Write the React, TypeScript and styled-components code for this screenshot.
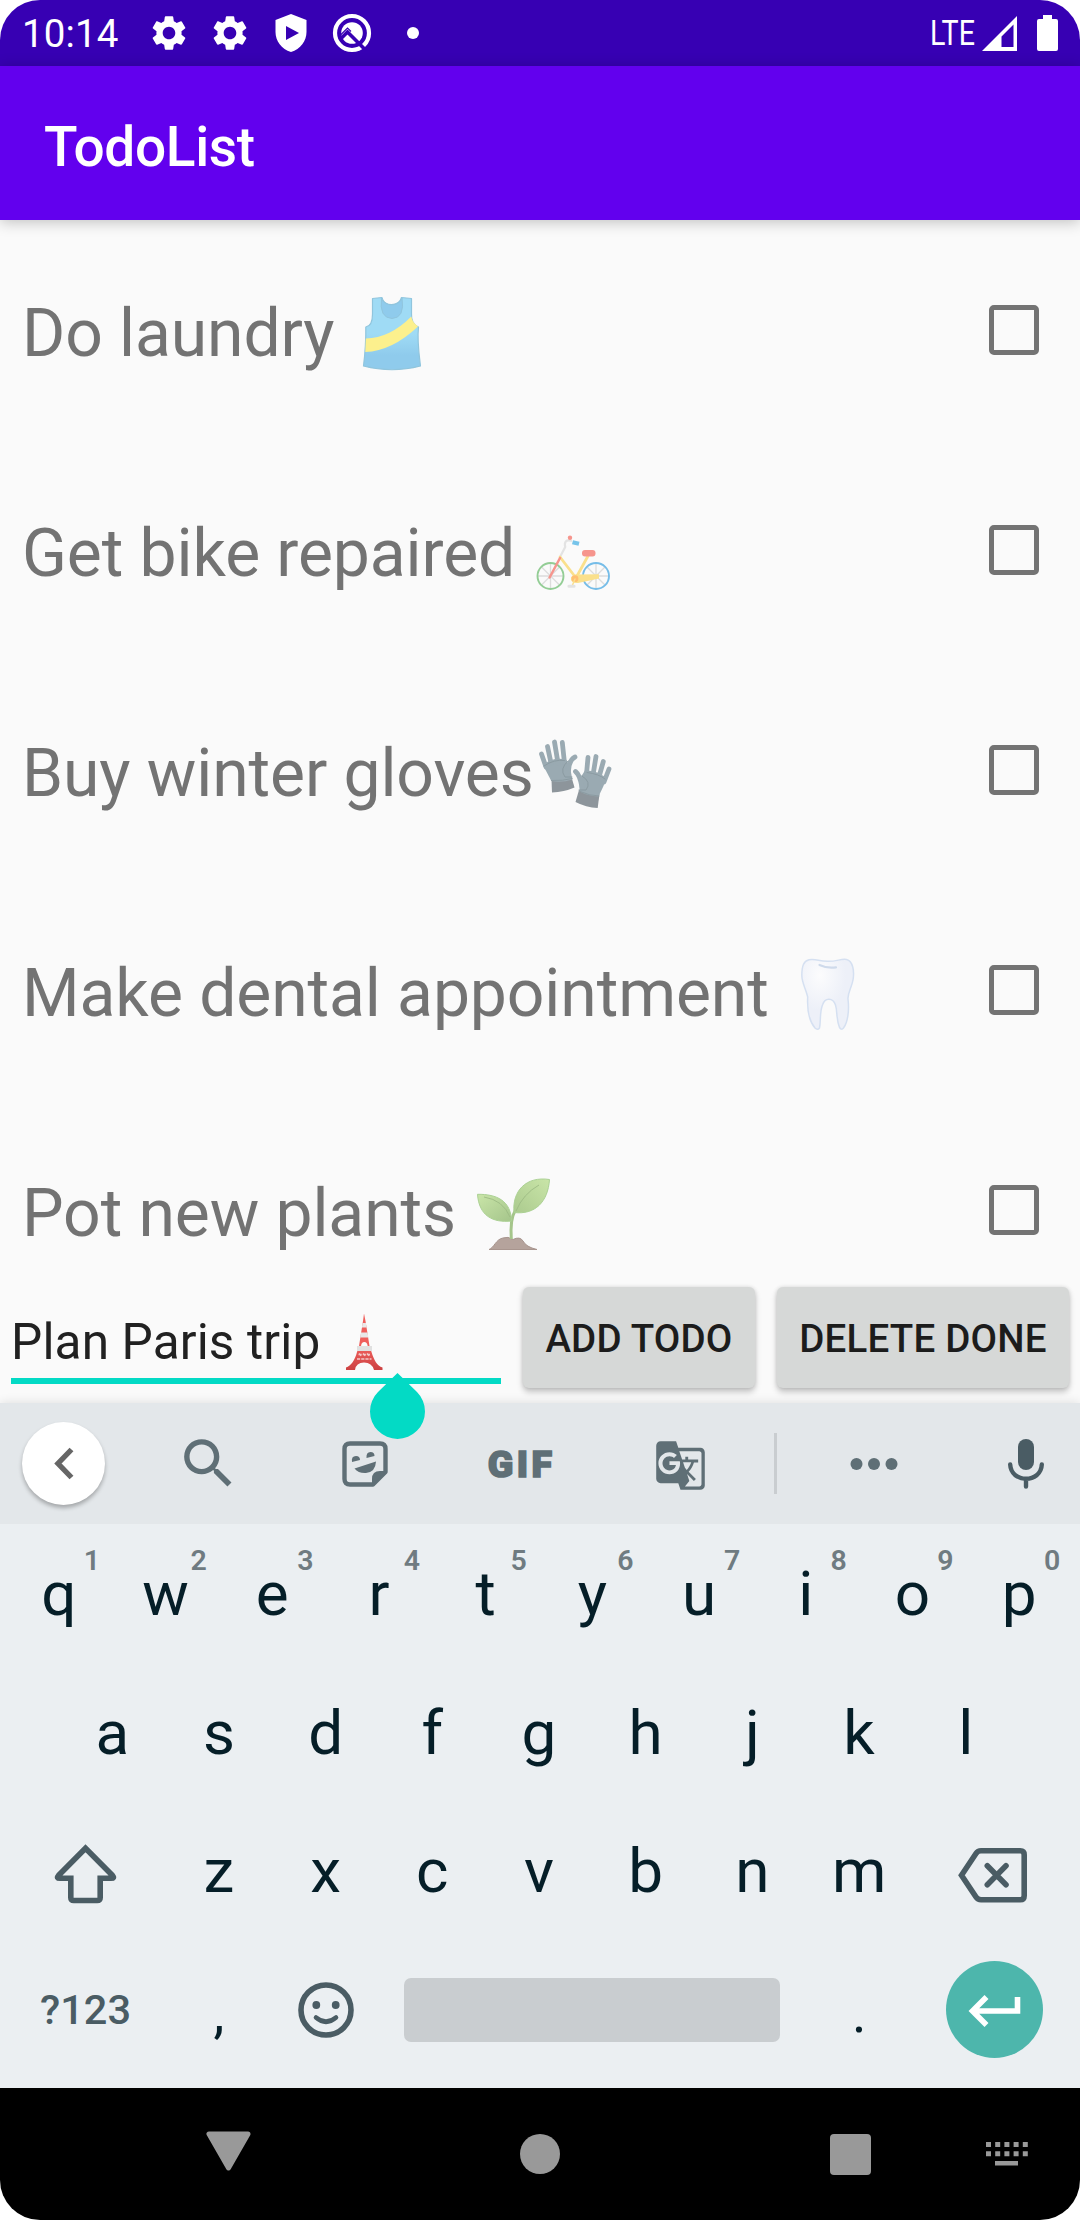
import React from "react";
import styled, { createGlobalStyle } from "styled-components";
import { MdGTranslate, MdSearch, MdSettings } from "react-icons/md";

const GlobalStyle = createGlobalStyle`
  body { margin: 0; background: #fff; }
  * { box-sizing: border-box; }
  svg { display: block; flex: none; overflow: visible; }
`;

const Screen = styled.div`
  width: 1080px;
  height: 2220px;
  display: flex;
  flex-direction: column;
  overflow: hidden;
  border-radius: 40px;
  background: #fafafa;
  font-family: Roboto, "Noto Sans", sans-serif;
`;

const StatusBar = styled.header`
  height: 66px;
  flex: none;
  display: flex;
  align-items: center;
  background: #3700b3;
  color: #fff;
`;

const Clock = styled.time`
  width: 138px;
  padding: 1px 0 0 22px;
  font-size: 38.5px;
  line-height: 46px;
  letter-spacing: 0.15px;
`;

const StatusSlot = styled.span`
  width: 61px;
  display: flex;
  justify-content: center;
`;

const NotificationDot = styled.i`
  width: 12px;
  height: 12px;
  border-radius: 50%;
  background: #fff;
`;

const SystemIcons = styled.div`
  margin-left: auto;
  padding-right: 22px;
  display: flex;
  align-items: center;
`;

const NetworkLabel = styled.span`
  width: 52px;
  font-size: 34.5px;
  line-height: 40px;
  transform: scaleX(0.83);
  transform-origin: left center;
  white-space: nowrap;
`;

const BatterySlot = styled.span`
  padding-left: 20px;
`;

const AppBar = styled.div`
  height: 154px;
  flex: none;
  display: flex;
  align-items: center;
  padding: 7px 44px 0;
  background: #6200ee;
  color: #fff;
  position: relative;
  box-shadow: 0 2px 14px rgba(0, 0, 0, 0.24);
`;

const Title = styled.h1`
  margin: 0;
  font-size: 55px;
  line-height: 64px;
  font-weight: 500;
  letter-spacing: -0.35px;
`;

const TodoList = styled.main`
  height: 1051px;
  flex: none;
  overflow: hidden;
`;

const TodoRow = styled.div`
  height: 220px;
  padding: 0 41px 0 22px;
  display: flex;
  align-items: center;
`;

const TodoText = styled.span`
  padding-top: 7px;
  font-size: 66px;
  line-height: 78px;
  letter-spacing: -0.1px;
  color: #737373;
  white-space: pre;
`;

const CheckBox = styled.span`
  width: 50px;
  height: 50px;
  margin-left: auto;
  border: 5.5px solid #737373;
  border-radius: 5px;
`;

const EntryBar = styled.div`
  height: 132px;
  flex: none;
  display: flex;
  align-items: flex-start;
  gap: 22px;
  padding: 16px 11px 0;
`;

const EntryField = styled.div`
  position: relative;
  width: 490px;
  flex: none;
  height: 97px;
  padding-top: 22px;
  display: flex;
  align-items: flex-start;
  border-bottom: 6px solid #03dac5;
`;

const EntryText = styled.span`
  padding-top: 4px;
  font-size: 49.5px;
  line-height: 58px;
  letter-spacing: 0.15px;
  color: #212121;
  white-space: pre;
`;

const CursorHandle = styled.span`
  position: absolute;
  left: 359px;
  top: 86px;
  z-index: 2;
`;

const ActionButton = styled.button<{ $width: number }>`
  width: ${(p) => p.$width}px;
  height: 101px;
  padding: 2px 0 0;
  flex: none;
  border: 0;
  border-radius: 6px;
  background: #d6d8d7;
  box-shadow: 0 4px 6px rgba(0, 0, 0, 0.22), 0 0 4px rgba(0, 0, 0, 0.12);
  color: #1c1c1c;
  font: 500 38.5px / 46px Roboto, "Noto Sans", sans-serif;
  letter-spacing: 0.2px;
  white-space: nowrap;
`;

const Keyboard = styled.section`
  height: 685px;
  flex: none;
  display: flex;
  flex-direction: column;
  background: #ebeff2;
  box-shadow: 0 0 10px rgba(0, 0, 0, 0.12);
`;

const Toolbar = styled.div`
  height: 121px;
  flex: none;
  display: grid;
  grid-template-columns: 127px 163px 149px 162px 173px 3px 193px 110px;
  align-items: center;
  justify-items: center;
  background: #e3e7ea;
  color: #5f6f76;
`;

const BackCircle = styled.span`
  width: 83px;
  height: 83px;
  display: flex;
  align-items: center;
  justify-content: center;
  border-radius: 50%;
  background: #fff;
  box-shadow: 0 3px 4px rgba(0, 0, 0, 0.28);
`;

const GifLabel = styled.span`
  font-size: 37.5px;
  line-height: 44px;
  font-weight: 900;
  letter-spacing: 3.4px;
  padding-left: 3px;
  -webkit-text-stroke: 1.6px #5f6f76;
`;

const TranslateSlot = styled.span`
  padding: 4px 14px 0 0;
`;

const Divider = styled.i`
  width: 3px;
  height: 61px;
  background: #c9cdd0;
`;

const MicSlot = styled.span`
  padding-left: 2px;
`;

const Keys = styled.div`
  flex: none;
  padding: 20px 7.5px 0 5.5px;
  display: flex;
  flex-direction: column;
`;

const KeyRow = styled.div<{ $packed?: boolean }>`
  height: ${(p) => (p.$packed ? 120 : 138.5)}px;
  display: flex;
  justify-content: ${(p) => (p.$packed ? "flex-start" : "center")};
`;

const Key = styled.span<{ $units?: number }>`
  position: relative;
  width: ${(p) => (p.$units ?? 1) * 106.7}px;
  height: 100px;
  flex: none;
  display: flex;
  align-items: center;
  justify-content: center;
  font-size: 62px;
  line-height: 72px;
  color: #051e28;
`;

const ModifierKey = styled(Key)`
  padding-top: 6px;
`;

const Hint = styled.sup`
  position: absolute;
  left: 50%;
  top: 0;
  width: 66px;
  text-align: center;
  font-size: 28.5px;
  line-height: 34px;
  font-weight: 600;
  color: #6f7b81;
`;

const ModeKey = styled(Key)`
  font-size: 41.5px;
  font-weight: 500;
  color: #4a5c64;
`;

const PunctuationKey = styled(Key)`
  padding-top: 6px;
  font-size: 55px;
`;

const SpaceBar = styled.span`
  width: 376px;
  height: 64px;
  flex: none;
  margin: 18px 26px 0 25px;
  border-radius: 7px;
  background: #c9cdd0;
`;

const EnterKey = styled.span`
  width: 97px;
  height: 97px;
  flex: none;
  margin: 1px 0 0 33px;
  display: flex;
  align-items: center;
  justify-content: center;
  border-radius: 50%;
  background: #4db6ac;
`;

const NavBar = styled.nav`
  height: 132px;
  flex: none;
  display: grid;
  grid-template-columns: 457px 166px 455px;
  justify-items: center;
  align-items: center;
  background: #000;
  position: relative;
`;

const BackSlot = styled.span`
  padding-bottom: 6px;
`;

const SwitcherSlot = styled.span`
  position: absolute;
  right: 52px;
  top: 54px;
`;

/* ---------- status icons ---------- */

const ShieldIcon = () => (
  <svg width="32" height="38" viewBox="0 0 32 38">
    <path fill="#fff" fillRule="evenodd" d="M16 0 31.5 6v12c0 9-6 17-15.500 20C6.500 35 .5 27 .5 18V6zM11 12v14l13-7z" />
  </svg>
);

const DebugIcon = () => (
  <svg width="38" height="38" viewBox="0 0 38 38" fill="none">
    <circle cx="19" cy="19" r="17" stroke="#fff" strokeWidth="4.200" />
    <circle cx="19" cy="19" r="10.800" fill="#fff" />
    <path d="M7 25.500 14.500 18 33 36.500" stroke="#3700b3" strokeWidth="3.600" />
    <path d="M7.500 21 14.500 14 18 17.500" stroke="#3700b3" strokeWidth="1.200" />
  </svg>
);

const SignalIcon = () => (
  <svg width="35" height="35" viewBox="0 0 35 35">
    <path fill="#fff" fillRule="evenodd" d="M0 35 35 0V35zM31.500 8.500 19.500 20.500V31H31.500z" />
  </svg>
);

const BatteryIcon = () => (
  <svg width="21" height="36" viewBox="0 0 21 36">
    <path fill="#fff" d="M6 0h9v4h4q2 0 2 2v28q0 2-2 2H2q-2 0-2-2V6q0-2 2-2h4z" />
  </svg>
);

/* ---------- emoji ---------- */

const TankTop = () => (
  <svg width="82" height="82" role="img" aria-label="running shirt">
    <defs>
      <linearGradient id="shirt" x1="0" y1="0" x2="0" y2="1">
        <stop offset="0.500" stopColor="#9fdbf5" />
        <stop offset="0.800" stopColor="#8fcbec" />
      </linearGradient>
    </defs>
    <path
      d="M21.500 9.500 31 8.500C33 18 48 18 50.500 8.500L60.500 9.500V25Q60 35 67.500 38C66 52 68 65 69.500 77Q41 84.500 12.500 77C14 65 15 50 14.800 38Q21.500 37 21.500 25z"
      fill="url(#shirt)"
      stroke="#90c5dd"
      strokeWidth="1.200"
      strokeLinejoin="round"
    />
    <path d="M30.500 9C33 18 48 18 51 9Q54 29 41 29.500Q28 29 30.500 9z" fill="#8fcbec" stroke="#90c5dd" strokeWidth="1" />
    <path d="M14.800 49.500Q39 49 60.300 27.500Q61 33 67 37.500Q41 62 14.300 63z" fill="#fcf08d" />
  </svg>
);

const spokes = [0, 45, 90, 135];

const Wheel = ({ x, color }: { x: number; color: string }) => (
  <g transform={`translate(${x} 67)`} fill="none">
    {spokes.map((a) => (
      <path key={a} d="M-12 0H12" stroke="#dcdcdc" strokeWidth="1.300" transform={`rotate(${a})`} />
    ))}
    <circle r="13" stroke={color} strokeWidth="1.900" />
  </g>
);

const Bicycle = () => (
  <svg width="82" height="82" role="img" aria-label="bicycle" fill="none" strokeLinecap="round">
    <Wheel x={18.5} color="#93cd95" />
    <Wheel x={64} color="#76bde8" />
    <path d="M28.500 47 33.200 38Q31.500 30 39 31.800" stroke="#e3e3e3" strokeWidth="2.200" />
    <circle cx="38" cy="28.700" r="2.200" fill="#f6958d" />
    <path d="M40.500 33.300 47 34.800" stroke="#76c4ea" strokeWidth="4.200" strokeLinecap="butt" />
    <path d="M56 47 45 67M28 48 43.300 68" stroke="#fae08c" strokeWidth="2.800" />
    <path d="M28 49 17.600 68.500" stroke="#f6958d" strokeWidth="2.500" />
    <path d="M43 65.500 67 65.200V69.500L46 74Q38 74.500 39 68z" fill="#fae08c" />
    <circle cx="43" cy="69.700" r="3.400" fill="#ffbf72" />
    <path d="M43 70 40.500 76" stroke="#fae08c" strokeWidth="1.500" />
    <rect x="35.500" y="75.700" width="8" height="3" rx="1.300" fill="#e3e3e3" />
    <rect x="50" y="41" width="13.500" height="6.500" rx="3" fill="#f6958d" />
  </svg>
);

const Gloves = () => (
  <svg width="82" height="82" role="img" aria-label="gloves" fill="none" strokeLinecap="round" strokeLinejoin="round">
    <path d="M17.500 51 18 63.500Q30 63 40.500 58.500L37.500 48z" fill="#8d959b" />
    <path d="M45 61 41.500 73Q52 78.500 63.700 79L65.500 65z" fill="#8d959b" />
    <g fill="#9aaab2">
      <path d="M9 36Q20 27 32.500 31L36 38 38.300 50.500Q28 54 17.300 52z" />
      <path d="M51 41.500Q62 41 72 48.500L69.500 57 64.500 67.500Q54 67 45.500 62.500V50z" />
    </g>
    <g stroke="#9aaab2" strokeWidth="4.800">
      <path d="M7.500 25 12 38M13.500 17.500 17 34M20.500 13 24 34M28.300 13.500 30.500 34" />
      <path d="M54 28.500 52.500 45M62 27.500 59 46M69.300 32.500 65 48M75 40 70 53" />
      <path d="M41 28Q35 31 34.500 42M41.500 42.500Q46 46 48 58" />
    </g>
    <g stroke="#89989f" strokeWidth="0.900">
      <path d="M10 37Q20 30 30.500 31.500M34 32Q25 40 31 48L38 48M17.500 51.500Q29 52 38.300 49.500" />
      <path d="M53 43.500Q65 45 71 50M48 47Q58 53 52 61L45 61M46 62.500Q56 67 65 67" />
    </g>
  </svg>
);

const Tooth = () => (
  <svg width="82" height="82" role="img" aria-label="tooth">
    <defs>
      <radialGradient id="enamel" cx="0.350" cy="0.230" r="0.500">
        <stop offset="0" stopColor="#fcfcfd" />
        <stop offset="1" stopColor="#edf0f8" />
      </radialGradient>
    </defs>
    <path
      d="M24 10.800C31 9.500 34 12.500 43 12.300C52 12.500 56 9.500 61.500 10.500C68 12 69.500 22 68 31C66.500 39 62.500 44 63 50C64.500 62 62.500 74 58.500 79Q56.500 81.500 54.500 78.500C51 70 52.500 62 50.500 56C48 48.500 40 48 37.500 56C34.500 63 36 72 34.500 79Q32.500 81.500 30 79C24 72 22 62 22.700 48C21 40 16.800 34 16.800 26C17 17 18.500 12 24 10.800z"
      fill="url(#enamel)"
      stroke="#d5e0f1"
      strokeWidth="1.500"
    />
    <path d="M34.500 16Q42 19.500 51 18.300" fill="none" stroke="#cfdaeb" strokeWidth="2.200" strokeLinecap="round" />
  </svg>
);

const Seedling = () => (
  <svg width="82" height="82" role="img" aria-label="seedling">
    <defs>
      <linearGradient id="leaf" x1="1" y1="0" x2="0" y2="1">
        <stop offset="0" stopColor="#c9e5a8" />
        <stop offset="1" stopColor="#abca8e" />
      </linearGradient>
      <linearGradient id="leafSmall" x1="0" y1="0" x2="1" y2="1">
        <stop offset="0" stopColor="#c9e5a8" />
        <stop offset="1" stopColor="#a5c58b" />
      </linearGradient>
    </defs>
    <path d="M17 80.500C22 79 24 70 31 69Q36 67 41 70.500Q48 67 51 72Q54 78 65 80.500z" fill="#b5a39c" stroke="#a8958e" strokeWidth="1" />
    <path d="M43 42Q38 50 39.300 70" fill="none" stroke="#a5c58b" strokeWidth="3" />
    <path d="M5.500 25.300C25 25 39 32 39.500 52C21 54 7 47 5.500 25.300z" fill="url(#leafSmall)" stroke="#abd193" strokeWidth="1" />
    <path d="M77.500 10.500C54 7 40 22 42 43.500C63 46 76 33 77.500 10.500z" fill="url(#leaf)" stroke="#abd193" strokeWidth="1" />
    <path d="M12 28Q31 31 38 48M44 42Q51 25 67 16" fill="none" stroke="#9dbb83" strokeWidth="0.900" />
  </svg>
);

const Tower = () => (
  <svg width="62" height="62" role="img" aria-label="tower">
    <defs>
      <linearGradient id="tower" x1="0" y1="0" x2="0" y2="1">
        <stop offset="0.600" stopColor="#ef5f5c" />
        <stop offset="1" stopColor="#cc4142" />
      </linearGradient>
    </defs>
    <path
      d="M31 4.500 32.500 12 36.500 37 38.500 43C41 51 44 57 49.500 58.500V61H41Q39 53.500 31 53.500T22 61H13V58.500C18 57 22 51 24 43L26 37 30 12z"
      fill="url(#tower)"
    />
    <path d="M29.600 14h3.300l.8 4.500h-4.800zM28 23.500h6.500l.9 5h-8.200z" fill="#e8e8e8" />
    <rect x="24" y="37" width="15" height="5" fill="#e0e0e0" />
    <path d="M28 37Q28.500 33 31.300 33T34.700 37z" fill="#fafafa" />
    <path d="M25.500 45.500h11.500M24 50h14.500M26 44.500l3 3M30 44.500l3 3M34 44.500l3 3" stroke="#f3c9c8" strokeWidth="1.600" strokeDasharray="3.200 1" />
  </svg>
);

/* ---------- keyboard icons ---------- */

const StickerIcon = () => (
  <svg width="46" height="46" viewBox="0 0 46 46" fill="#5f6f76">
    <path d="M31 43.500H8Q2.500 43.500 2.500 38V8Q2.500 2.500 8 2.500H38Q43.500 2.500 43.500 8V31z" fill="none" stroke="#5f6f76" strokeWidth="4.400" strokeLinejoin="round" />
    <path d="M30 44V38Q30 30 38 30H44z" />
    <path d="M10 21Q9 15 14 15Q18 15 18 19zM24.500 17Q24 11 28.500 11Q32.500 11 32.500 15z" />
    <path d="M12.500 27.500 34 20.500Q33.500 31 24 32Q16.500 32.500 12.500 27.500z" />
  </svg>
);

const ChevronIcon = () => (
  <svg width="20" height="33" viewBox="0 0 20 33">
    <path d="M17.500 2.500 4 16.500 17.500 30.500" fill="none" stroke="#666" strokeWidth="5.400" />
  </svg>
);

const MoreIcon = () => (
  <svg width="48" height="12" viewBox="0 0 48 12" fill="#5f6f76">
    <circle cx="6.500" cy="6" r="6" />
    <circle cx="24" cy="6" r="6" />
    <circle cx="41.500" cy="6" r="6" />
  </svg>
);

const MicIcon = () => (
  <svg width="36" height="50" viewBox="0 0 36 50">
    <rect x="10" y="0" width="16" height="31" rx="8" fill="#4a5c64" />
    <path d="M2.200 25.500C3 44.500 33 44.500 33.800 25.500M18 40V47.500" fill="none" stroke="#4a5c64" strokeWidth="4.400" strokeLinecap="round" />
  </svg>
);

const ShiftIcon = () => (
  <svg width="63" height="60" viewBox="0 0 63 60">
    <path
      d="M31.500 4.200 4.500 31.500Q2 34.300 6 34.300H16.800V53.500Q16.800 56.500 19.800 56.500H43.200Q46.200 56.500 46.200 53.500V34.300H57Q61 34.300 58.500 31.500z"
      fill="none"
      stroke="#4a5c64"
      strokeWidth="5.600"
    />
  </svg>
);

const BackspaceIcon = () => (
  <svg width="71" height="55" viewBox="0 0 71 55" fill="none" stroke="#4a5c64" strokeWidth="5.600">
    <path d="M4.500 28.300 19 6.500Q20.800 3.800 24 3.800H63.200Q67.200 3.800 67.200 7.800V48.700Q67.200 52.700 63.200 52.700H24Q20.800 52.700 19 50z" />
    <path d="M30.300 18.800 49 37.800M49 18.800 30.300 37.800" strokeLinecap="round" />
  </svg>
);

const SmileIcon = () => (
  <svg width="56" height="56" viewBox="0 0 56 56" fill="#4a5c64">
    <circle cx="28" cy="28" r="25" fill="none" stroke="#4a5c64" strokeWidth="5.600" />
    <circle cx="18.300" cy="23" r="3.900" />
    <circle cx="37.700" cy="23" r="3.900" />
    <path d="M18 35.500Q28 44 38 35.500" fill="none" stroke="#4a5c64" strokeWidth="4.600" strokeLinecap="round" />
  </svg>
);

const ReturnIcon = () => (
  <svg width="53" height="29" viewBox="0 0 53 29">
    <path d="M18.500 2 4.500 16 18.500 30M4.500 16H49.500V2" fill="none" stroke="#fff" strokeWidth="5.600" />
  </svg>
);

const BackIcon = () => (
  <svg width="45" height="40" viewBox="0 0 45 40">
    <path d="M3 3H42L22.500 37z" fill="#999" stroke="#999" strokeWidth="5" strokeLinejoin="round" />
  </svg>
);

const HomeIcon = styled.i`
  width: 40px;
  height: 40px;
  border-radius: 50%;
  background: #999;
`;

const RecentsIcon = styled.i`
  width: 41px;
  height: 41px;
  margin: 1px 0 0 -1px;
  border-radius: 4px;
  background: #999;
`;

const SwitcherIcon = () => (
  <svg width="42" height="24" viewBox="0 0 42 24" fill="#999">
    {[0, 9.2, 18.4, 27.6, 36.8].map((x) => (
      <path key={x} d={`M${x} 0h5v5h-5zM${x} 9.300h5v5h-5z`} />
    ))}
    <rect x="9" y="19" width="23" height="4.500" />
  </svg>
);

const todos = [
  { text: "Do laundry ", Emoji: TankTop },
  { text: "Get bike repaired ", Emoji: Bicycle },
  { text: "Buy winter gloves", Emoji: Gloves },
  { text: "Make dental appointment ", Emoji: Tooth },
  { text: "Pot new plants ", Emoji: Seedling },
];

export default function App() {
  return (
    <>
      <GlobalStyle />
      <Screen>
        <StatusBar>
          <Clock>10:14</Clock>
          <StatusSlot><MdSettings size={42} /></StatusSlot>
          <StatusSlot><MdSettings size={42} /></StatusSlot>
          <StatusSlot><ShieldIcon /></StatusSlot>
          <StatusSlot><DebugIcon /></StatusSlot>
          <StatusSlot><NotificationDot /></StatusSlot>
          <SystemIcons>
            <NetworkLabel>LTE</NetworkLabel>
            <SignalIcon />
            <BatterySlot><BatteryIcon /></BatterySlot>
          </SystemIcons>
        </StatusBar>
        <AppBar><Title>TodoList</Title></AppBar>
        <TodoList>
          {todos.map(({ text, Emoji }) => (
            <TodoRow key={text}>
              <TodoText>{text}</TodoText>
              <Emoji />
              <CheckBox />
            </TodoRow>
          ))}
        </TodoList>
        <EntryBar>
          <EntryField>
            <EntryText>{"Plan Paris trip "}</EntryText>
            <Tower />
            <CursorHandle>
              <svg width="55" height="66" viewBox="0 0 55 66">
                <path d="M27.500 0 47 19A27.500 27.500 0 1 1 8 19z" fill="#03dac5" />
              </svg>
            </CursorHandle>
          </EntryField>
          <ActionButton $width={232}>ADD TODO</ActionButton>
          <ActionButton $width={292}>DELETE DONE</ActionButton>
        </EntryBar>
        <Keyboard>
          <Toolbar>
            <BackCircle><ChevronIcon /></BackCircle>
            <MdSearch size={65} />
            <StickerIcon />
            <GifLabel>GIF</GifLabel>
            <TranslateSlot><MdGTranslate size={53} /></TranslateSlot>
            <Divider />
            <MoreIcon />
            <MicSlot><MicIcon /></MicSlot>
          </Toolbar>
          <Keys>
            <KeyRow>
              {[..."qwertyuiop"].map((c, i) => (
                <Key key={c}>{c}<Hint>{(i + 1) % 10}</Hint></Key>
              ))}
            </KeyRow>
            <KeyRow>
              {[..."asdfghjkl"].map((c) => <Key key={c}>{c}</Key>)}
            </KeyRow>
            <KeyRow>
              <ModifierKey $units={1.5}><ShiftIcon /></ModifierKey>
              {[..."zxcvbnm"].map((c) => <Key key={c}>{c}</Key>)}
              <ModifierKey $units={1.5}><BackspaceIcon /></ModifierKey>
            </KeyRow>
            <KeyRow $packed>
              <ModeKey $units={1.5}>?123</ModeKey>
              <PunctuationKey>,</PunctuationKey>
              <Key><SmileIcon /></Key>
              <SpaceBar />
              <PunctuationKey>.</PunctuationKey>
              <EnterKey><ReturnIcon /></EnterKey>
            </KeyRow>
          </Keys>
        </Keyboard>
        <NavBar>
          <BackSlot><BackIcon /></BackSlot>
          <HomeIcon />
          <RecentsIcon />
          <SwitcherSlot><SwitcherIcon /></SwitcherSlot>
        </NavBar>
      </Screen>
    </>
  );
}
